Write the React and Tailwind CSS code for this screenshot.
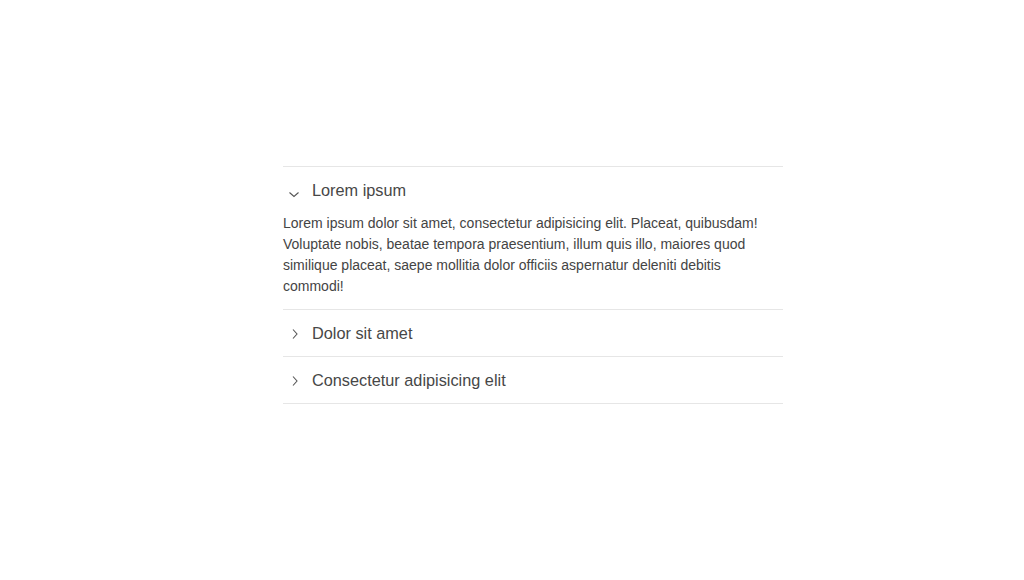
import React, { useState } from 'react';

const items = [
  {
    title: 'Lorem ipsum',
    body: 'Lorem ipsum dolor sit amet, consectetur adipisicing elit. Placeat, quibusdam! Voluptate nobis, beatae tempora praesentium, illum quis illo, maiores quod similique placeat, saepe mollitia dolor officiis aspernatur deleniti debitis commodi!',
  },
  { title: 'Dolor sit amet', body: 'Lorem ipsum dolor sit amet.' },
  { title: 'Consectetur adipisicing elit', body: 'Lorem ipsum dolor sit amet.' },
];

function Chevron({ open }) {
  return (
    <svg
      width="12"
      height="12"
      viewBox="0 0 12 12"
      fill="none"
      stroke="#555"
      strokeWidth="1.1"
      className={open ? 'mt-[7px]' : 'mt-[1px]'}
    >
      {open ? <path d="M1.5 4.5 L6 8.5 L10.5 4.5" /> : <path d="M5 1.5 L9 6 L5 10.5" />}
    </svg>
  );
}

export default function App() {
  const [open, setOpen] = useState(0);

  return (
    <div className="min-h-screen bg-white pt-[166px] font-['Liberation_Sans',Arial,sans-serif]">
      <div className="ml-[283px] w-[500px] border-t border-[#e6e6e6]">
        {items.map((item, i) => (
          <div key={item.title} className="border-b border-[#e6e6e6]">
            <button
              type="button"
              onClick={() => setOpen(open === i ? -1 : i)}
              className="flex w-full items-center gap-[12px] py-[12px] pl-[5px] text-left text-[16.3px] leading-[22px] text-[#474747] cursor-pointer"
            >
              <Chevron open={open === i} />
              <span>{item.title}</span>
            </button>
            {open === i && (
              <p className="pb-[12px] text-[14px] leading-[21px] text-[#444]">{item.body}</p>
            )}
          </div>
        ))}
      </div>
    </div>
  );
}
